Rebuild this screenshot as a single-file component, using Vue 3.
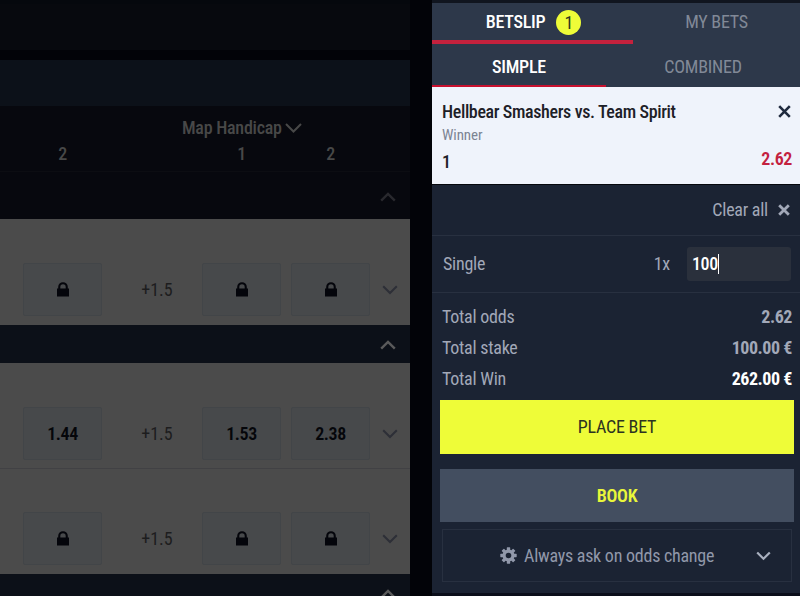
<script setup>
import { ref } from 'vue'

// Markets list: an odd set to null is locked
const groups = [
  { id: 1, rows: [{ id: 11, line: '+1.5', main: null, odds: [null, null] }] },
  {
    id: 2,
    rows: [
      { id: 21, line: '+1.5', main: '1.44', odds: ['1.53', '2.38'] },
      { id: 22, line: '+1.5', main: null, odds: [null, null] }
    ]
  },
  { id: 3, rows: [] }
]

const totals = [
  { label: 'Total odds', value: '2.62' },
  { label: 'Total stake', value: '100.00 €' },
  { label: 'Total Win', value: '262.00 €', strong: true }
]

const stake = ref('100')
</script>

<template>
  <div class="page">
    <main class="events">
      <div class="banner"></div>
      <div class="league"></div>
      <div class="columns">
        <div class="columns-title">
          <span>Map Handicap</span>
          <svg width="17" height="10" viewBox="0 0 17 10"><path d="M1 1l7.5 7.5L16 1" /></svg>
        </div>
        <div class="columns-labels">
          <span>2</span>
          <span></span>
          <span>1</span>
          <span>2</span>
        </div>
      </div>

      <section v-for="group in groups" :key="group.id" class="group">
        <div class="group-head" :class="{ first: group.id === 1 }">
          <svg width="16" height="10" viewBox="0 0 16 10"><path d="M1.2 8.7L8 2l6.8 6.7" /></svg>
        </div>
        <div v-for="row in group.rows" :key="row.id" class="row">
          <template v-for="(odd, i) in [row.main, ...row.odds]" :key="i">
            <button class="odd">
              <span v-if="odd">{{ odd }}</span>
              <svg v-else class="lock" width="12" height="15" viewBox="0 0 12 15">
                <path d="M0 6.6h1.2V5a4.8 4.8 0 0 1 9.6 0v1.6H12V14.5H0zM3.3 6.6h5.4V5a2.7 2.7 0 0 0-5.4 0z" />
              </svg>
            </button>
            <span v-if="i === 0" class="line">{{ row.line }}</span>
          </template>
          <svg class="more" width="16" height="10" viewBox="0 0 16 10"><path d="M1.2 1.2L8 8l6.8-6.8" /></svg>
        </div>
      </section>
    </main>

    <aside class="betslip">
      <nav class="tabs">
        <div class="tab active">BETSLIP <span class="count">1</span></div>
        <div class="tab">MY BETS</div>
      </nav>
      <nav class="tabs types">
        <div class="tab active">SIMPLE</div>
        <div class="tab">COMBINED</div>
      </nav>

      <div class="selection">
        <div class="selection-head">
          <span class="match">Hellbear Smashers vs. Team Spirit</span>
          <svg class="close" width="13" height="13" viewBox="0 0 13 13"><path d="M1.2 1.2l10.6 10.6M11.8 1.2L1.2 11.8" /></svg>
        </div>
        <div class="market">Winner</div>
        <div class="pick">
          <span class="outcome">1</span>
          <span class="price">2.62</span>
        </div>
      </div>

      <div class="clear">
        <span>Clear all</span>
        <svg width="12" height="12" viewBox="0 0 12 12"><path d="M1.2 1.2l9.6 9.6M10.8 1.2l-9.6 9.6" /></svg>
      </div>

      <div class="single">
        <span class="single-label">Single</span>
        <span class="times">1x</span>
        <div class="stake">{{ stake }}<i class="caret"></i></div>
      </div>

      <div class="totals">
        <div v-for="item in totals" :key="item.label" class="total">
          <span>{{ item.label }}</span>
          <b :class="{ strong: item.strong }">{{ item.value }}</b>
        </div>
      </div>

      <button class="place">PLACE BET</button>
      <button class="book">BOOK</button>

      <div class="setting">
        <svg class="gear" width="17" height="17" viewBox="-8.5 -8.5 17 17">
          <g>
            <rect v-for="a in 8" :key="a" x="-1.7" y="-8.2" width="3.4" height="4" rx="0.6" :transform="`rotate(${a * 45})`" />
          </g>
          <circle r="4.4" />
        </svg>
        <span>Always ask on odds change</span>
        <svg class="arrow" width="15" height="10" viewBox="0 0 15 10"><path d="M1.2 1.4l6.3 6.4 6.3-6.4" /></svg>
      </div>
    </aside>
  </div>
</template>

<style>
body {
  margin: 0;
  background: #020308;
  overflow: hidden;
}
</style>

<style scoped>
.page {
  display: flex;
  justify-content: space-between;
  width: 800px;
  height: 596px;
  overflow: hidden;
  background: #020308;
  font-family: 'Roboto Condensed', Roboto, sans-serif;
  font-stretch: 75%;
  font-size: 18px;
  line-height: 22px;
  letter-spacing: -0.25px;
}

.page * {
  box-sizing: border-box;
}

svg {
  display: block;
  flex: none;
  fill: none;
  stroke: currentColor;
  stroke-width: 2;
}

button {
  display: flex;
  align-items: center;
  justify-content: center;
  border: none;
  border-radius: 0;
  padding: 0;
  font: inherit;
  letter-spacing: inherit;
}

/* dimmed events list */
.events {
  width: 410px;
}

.banner {
  height: 50px;
  margin-bottom: 10px;
  border-top: 4px solid #05080d;
  background: #07090e;
}

.league {
  height: 46px;
  background: #0c1119;
}

.columns {
  height: 66px;
  padding-top: 11px;
  border-bottom: 1px solid #0c0d12;
  background: #07080e;
  color: #484848;
  font-weight: 500;
}

.columns-title {
  display: flex;
  align-items: center;
  gap: 3px;
  margin-left: 182px;
}

.columns-labels {
  display: grid;
  grid-template-columns: 79px 100px 79px 79px;
  margin: 4px 0 0 23px;
  text-align: center;
}

.columns-labels span:last-child {
  margin-left: 20px;
}

.group-head {
  display: flex;
  align-items: center;
  justify-content: flex-end;
  height: 38px;
  padding: 2px 14px 0 0;
  background: #0c1018;
  color: #5a5a5b;
}

.group-head svg {
  stroke-width: 2.4;
}

.group-head.first {
  height: 47px;
  background: #07080e;
  color: #29292e;
}

.row {
  display: flex;
  align-items: flex-end;
  height: 106px;
  padding: 0 0 9px 23px;
  background: #4b4b4b;
}

.row + .row {
  height: 105px;
}

.row:not(:last-child) {
  padding-bottom: 8px;
  border-bottom: 1px solid #414144;
}

.odd {
  width: 79px;
  height: 53px;
  border: 1px solid #424548;
  border-radius: 2px;
  background: #47494b;
  color: #05060a;
  font-weight: 600;
  letter-spacing: -0.45px;
}

.odd + .odd {
  margin-left: 10px;
}

.lock {
  fill: #04050b;
  stroke: none;
}

.line {
  width: 100px;
  padding: 0 0 15px 10px;
  color: #1d1d1e;
  letter-spacing: 0;
  text-align: center;
}

.more {
  margin: 0 0 21px 12px;
  color: #2d2f37;
}

/* betslip */
.betslip {
  display: flex;
  flex-direction: column;
  width: 368px;
  height: 596px;
  border-bottom: 3px solid #0b0e1a;
  background: #1b2333;
  color: #a2a8b8;
}

.tabs {
  display: flex;
  height: 44px;
  border-top: 3px solid #10151f;
  background: #2d384a;
  color: #818997;
}

.tab {
  display: flex;
  align-items: center;
  justify-content: center;
  flex: 1;
  padding-bottom: 3px;
}

.tab.active {
  flex: none;
  width: 201px;
  padding: 1px 0 0 2px;
  border-bottom: 4px solid #c4213d;
  color: #fff;
  font-weight: 500;
}

.count {
  width: 25px;
  height: 25px;
  margin-left: 11px;
  border-radius: 50%;
  background: #eefc38;
  color: #2c3320;
  font-weight: 400;
  line-height: 25px;
  text-align: center;
}

.types {
  height: 43px;
  border-top: none;
}

.types .tab {
  padding: 2px 0 0;
}

.types .tab.active {
  width: 174px;
  padding-top: 4px;
  border-bottom: 2px solid #c8102e;
}

.selection {
  height: 98px;
  padding: 13px 9px 0 10px;
  border-bottom: 1px solid #06080d;
  background: #eff3fb;
  color: #1d2027;
}

.selection-head {
  display: flex;
  align-items: center;
  justify-content: space-between;
  font-weight: 500;
}

.match {
  padding-top: 1px;
  letter-spacing: -0.37px;
}

.close {
  color: #1f2a3e;
  stroke-width: 2.6;
}

.market {
  color: #7c8493;
  font-size: 15px;
  line-height: 24px;
  letter-spacing: -0.1px;
}

.pick {
  display: flex;
  justify-content: space-between;
  margin-right: -1px;
  line-height: 24px;
}

.outcome {
  padding-top: 3px;
  font-weight: 500;
}

.price {
  color: #c3213f;
  font-weight: 600;
  letter-spacing: -0.4px;
}

.clear {
  display: flex;
  align-items: center;
  justify-content: flex-end;
  gap: 10px;
  height: 51px;
  padding-right: 10px;
  border-bottom: 1px solid #283040;
}

.clear svg {
  stroke-width: 2.8;
}

.single {
  display: flex;
  align-items: center;
  height: 57px;
  padding: 0 9px 0 11px;
  border-bottom: 1px solid #283040;
}

.times {
  margin-left: auto;
}

.stake {
  display: flex;
  align-items: center;
  width: 104px;
  height: 34px;
  margin-left: 17px;
  padding-left: 5px;
  border-radius: 3px;
  background: #2a303c;
  color: #fff;
  font-weight: 500;
  letter-spacing: -0.4px;
}

.caret {
  width: 1px;
  height: 20px;
  background: #fff;
}

.totals {
  height: 107px;
  padding: 8px 8px 0 10px;
}

.total {
  display: flex;
  justify-content: space-between;
  line-height: 31px;
}

.total b {
  letter-spacing: -0.45px;
}

.strong {
  color: #fff;
}

.place,
.book {
  height: 54px;
  margin: 0 6px 0 8px;
}

.place {
  background: #eefc38;
  color: #2c3320;
}

.book {
  height: 53px;
  margin-top: 15px;
  background: #434e60;
  color: #e9f63a;
  font-weight: 600;
}

.setting {
  display: flex;
  align-items: center;
  height: 53px;
  margin: 7px 8px 0 10px;
  padding: 0 20px 0 57px;
  border: 1px solid #283040;
  color: #9198aa;
}

.gear rect {
  fill: currentColor;
  stroke: none;
}

.gear circle {
  stroke-width: 3.2;
}

.setting span {
  margin-left: 7px;
}

.arrow {
  margin-left: auto;
  color: #a9b0bf;
  stroke-width: 2.2;
}
</style>
